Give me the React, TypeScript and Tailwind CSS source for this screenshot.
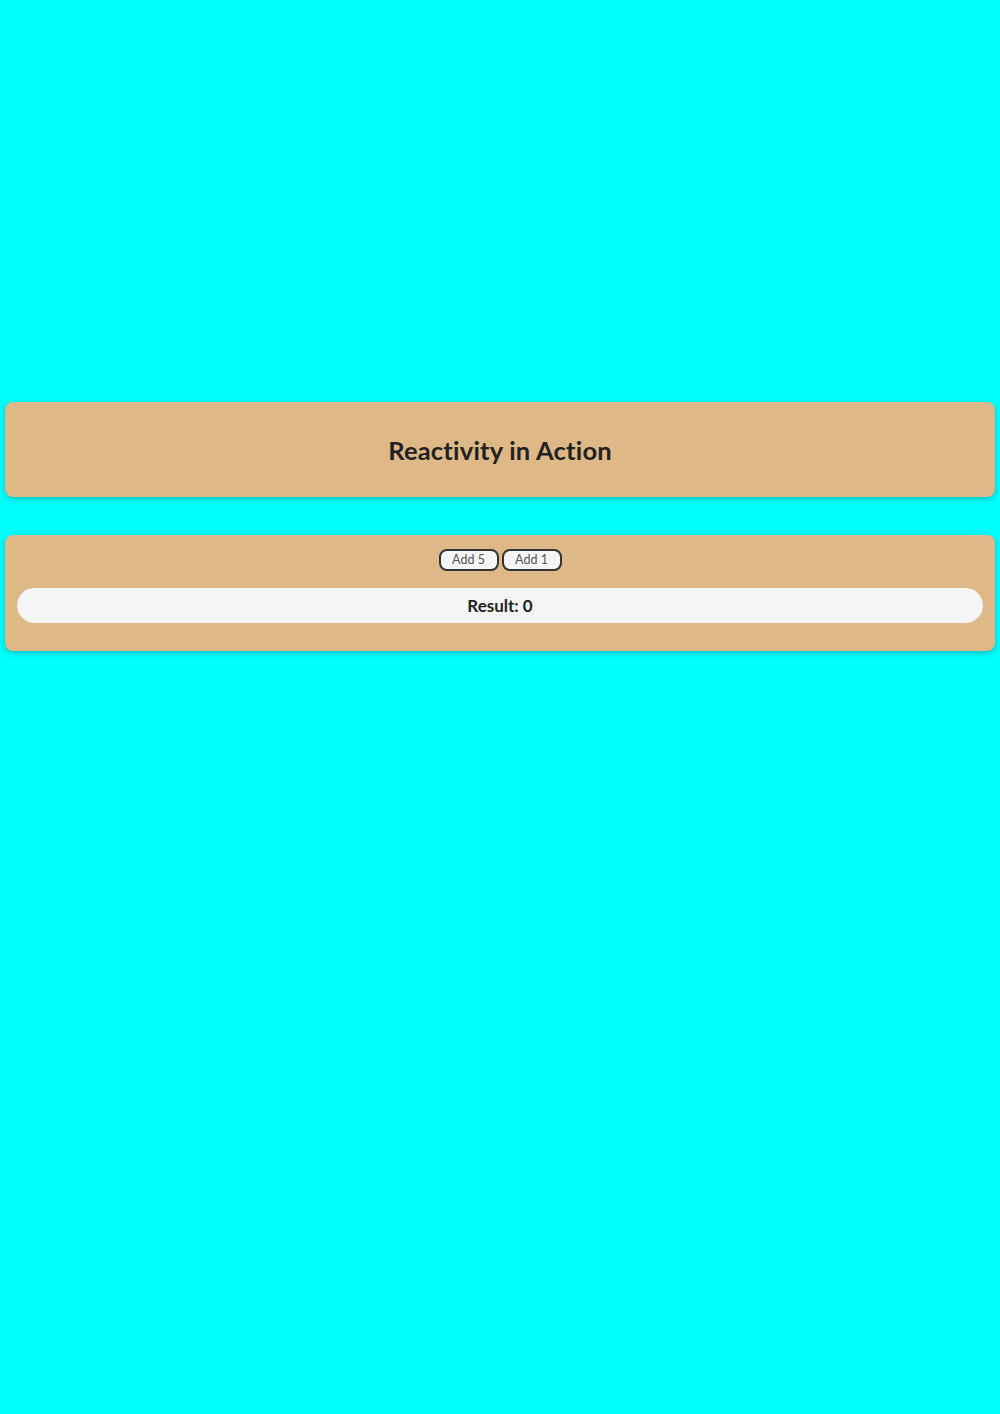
import { useState } from 'react';

const App = () => {
  const [result, setResult] = useState(0);

  return (
    <div className="min-h-[1414px] bg-[#00ffff] pt-[402px] px-[5px] font-['Lato','Liberation_Sans',sans-serif] text-[#222]">
      <div className="h-[95px] rounded-lg bg-[#deb887] shadow-[0_2px_6px_rgba(0,0,0,0.25)] flex items-center justify-center">
        <h1 className="text-[25.5px] font-bold tracking-[0.2px] pt-[2px]">Reactivity in Action</h1>
      </div>

      <div className="mt-[38px] rounded-lg bg-[#deb887] shadow-[0_2px_6px_rgba(0,0,0,0.25)] px-3 pt-[14px] pb-[28px]">
        <div className="flex justify-center gap-[3px]">
          <button
            className="w-[60px] h-[22px] rounded-lg border-2 border-[#333] bg-[#f5f5f5] text-[12.5px] text-[#555] leading-none"
            onClick={() => setResult(result + 5)}
          >
            Add 5
          </button>
          <button
            className="w-[60px] h-[22px] rounded-lg border-2 border-[#333] bg-[#f5f5f5] text-[12.5px] text-[#555] leading-none"
            onClick={() => setResult(result + 1)}
          >
            Add 1
          </button>
        </div>
        <div className="mt-[17px] h-[35px] rounded-full bg-[#f5f5f5] flex items-center justify-center">
          <p className="text-[17px] font-bold">Result: {result}</p>
        </div>
      </div>
    </div>
  );
};

export default App;
